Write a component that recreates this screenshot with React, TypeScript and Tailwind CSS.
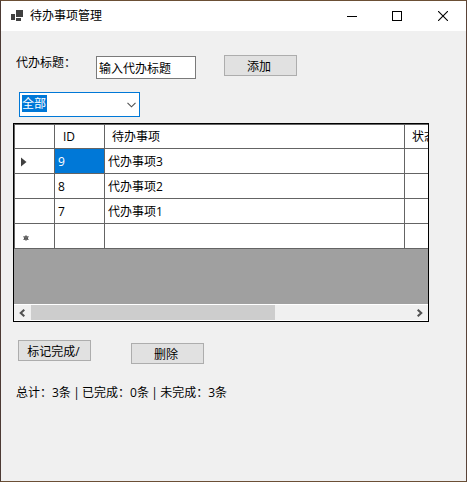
import { useState } from "react";

interface Todo {
  id: number;
  title: string;
}

const todos: Todo[] = [
  { id: 9, title: "代办事项3" },
  { id: 8, title: "代办事项2" },
  { id: 7, title: "代办事项1" },
];

function TitleBar() {
  return (
    <div className="flex h-[30px] shrink-0 items-center bg-white pl-[10px]">
      <svg width="12" height="11" viewBox="0 0 12 11" shapeRendering="crispEdges" fill="#3f3f3f" className="-mt-px">
        <rect x="5" y="0" width="7" height="7" />
        <rect x="0" y="4" width="4" height="6" />
        <rect x="5" y="8" width="5" height="3" />
      </svg>
      <span className="ml-[7px] grow">待办事项管理</span>
      <button className="flex h-full w-[46px] items-center justify-center" aria-label="最小化">
        <svg width="10" height="10" shapeRendering="crispEdges">
          <rect x="0" y="5" width="10" height="1" fill="#000" />
        </svg>
      </button>
      <button className="flex h-full w-[45px] items-center justify-center pr-px" aria-label="最大化">
        <svg width="10" height="10">
          <rect x="0.5" y="0.5" width="9" height="9" fill="none" stroke="#000" />
        </svg>
      </button>
      <button className="flex h-full w-[46px] items-center justify-center" aria-label="关闭">
        <svg width="10" height="10" stroke="#000" strokeWidth="1.1">
          <path d="M0 0L10 10M10 0L0 10" />
        </svg>
      </button>
    </div>
  );
}

function Button({ label, className }: { label: string; className: string }) {
  return (
    <button className={`flex h-[21px] w-[73px] items-center justify-center border border-[#adadad] bg-[#e1e1e1] ${className}`}>
      {label}
    </button>
  );
}

// one line of the grid, every cell draws its own right and bottom rule
function GridRow({ marker, id, title, selected }: { marker?: "current" | "new"; id?: number; title?: string; selected?: boolean }) {
  return (
    <div className="flex h-[25px] bg-white">
      <div className="flex w-10 shrink-0 items-center border-r border-b border-[#646464] pl-[6px]">
        {marker === "current" && (
          <svg width="6" height="10" className="mt-px">
            <path d="M0 0.5L5.5 5L0 9.5Z" fill="#404040" />
          </svg>
        )}
        {marker === "new" && (
          <svg width="7" height="7" className="mt-[4px] ml-[2px]" stroke="#6a6a6a" strokeWidth="1.2">
            <circle cx="3" cy="3" r="2.1" fill="#404040" stroke="none" />
            <path d="M3 0.2V5.8M0.4 1.4L5.6 4.6M5.6 1.4L0.4 4.6" />
          </svg>
        )}
      </div>
      <div className={`flex w-[50px] shrink-0 items-center border-r border-b border-[#646464] pt-[2px] pl-[3px] ${selected ? "bg-[#0078d7] text-white" : ""}`}>
        {id}
      </div>
      <div className="flex w-[300px] shrink-0 items-center border-r border-b border-[#646464] pt-[2px] pl-[3px]">{title}</div>
      <div className="grow border-b border-[#646464]" />
    </div>
  );
}

function TodoGrid() {
  return (
    <div className="mt-[6px] ml-[12px] flex h-[199px] w-[416px] flex-col overflow-hidden border border-black bg-[#a0a0a0]">
      <div className="border-t border-l border-[#646464]">
        <div className="flex h-6 bg-white">
          <div className="w-10 shrink-0 border-r border-b border-[#646464]" />
          <div className="flex w-[50px] shrink-0 items-center border-r border-b border-[#646464] pl-[8px]">ID</div>
          <div className="flex w-[300px] shrink-0 items-center border-r border-b border-[#646464] pl-[7px]">待办事项</div>
          <div className="flex w-[23px] shrink-0 items-center overflow-hidden border-b border-[#646464] pl-[7px] whitespace-nowrap">状态</div>
        </div>
        {todos.map((todo, index) => (
          <GridRow
            key={todo.id}
            id={todo.id}
            title={todo.title}
            marker={index === 0 ? "current" : undefined}
            selected={index === 0}
          />
        ))}
        <GridRow marker="new" />
      </div>
      <div className="mt-auto flex h-[17px] items-center border-y border-white bg-[#f0f0f0]">
        <div className="flex w-[17px] shrink-0 items-center justify-center pr-px">
          <svg width="6" height="8" fill="none" stroke="#505050" strokeWidth="2">
            <path d="M5.3 0.7L1.7 4L5.3 7.3" />
          </svg>
        </div>
        <div className="h-[15px] w-[244px] bg-[#cdcdcd]" />
        <div className="ml-auto flex w-[17px] items-center justify-center">
          <svg width="6" height="8" fill="none" stroke="#505050" strokeWidth="2">
            <path d="M0.7 0.7L4.3 4L0.7 7.3" />
          </svg>
        </div>
      </div>
    </div>
  );
}

function App() {
  const [title, setTitle] = useState("输入代办标题");

  return (
    <div className="flex h-[482px] w-[467px] flex-col overflow-hidden border border-[#6b4f35] border-r-[#5a4338] border-l-[#4c3a34] bg-[#f0f0f0] font-['Open_Sans','Noto_Sans_CJK_SC',sans-serif] text-[12px] leading-4 text-black">
      <TitleBar />
      <div className="flex h-[61px] shrink-0 items-start pl-[15px]">
        <label className="mt-[24px] w-20">代办标题：</label>
        <input
          className="mt-[25px] h-[23px] w-[100px] border border-[#7a7a7a] bg-white px-[2px] outline-none"
          value={title}
          onChange={(e) => setTitle(e.target.value)}
        />
        <Button label="添加" className="mt-6 ml-7 pt-[2px] pr-[3px]" />
      </div>

      <div className="ml-[18px] flex h-[25px] w-[121px] shrink-0 items-start justify-between border border-[#0078d7] bg-white">
        <span className="mt-[2px] ml-[2px] h-[17px] w-[25px] bg-[#0078d7] pt-px text-white">全部</span>
        <svg width="9" height="6" className="mt-[9px] mr-[3px]" fill="none" stroke="#505050" strokeWidth="1.1">
          <path d="M0.5 0.8L4.5 4.8L8.5 0.8" />
        </svg>
      </div>

      <TodoGrid />

      <div className="mt-[18px] flex shrink-0 items-start pl-[17px]">
        <Button label="标记完成/" className="pt-[2px] pr-[2px]" />
        <Button label="删除" className="mt-[3px] ml-10 pt-[2px] pr-[3px]" />
      </div>

      <p className="mt-[21px] ml-[15px] whitespace-nowrap [word-spacing:-0.8px]">总计：3条 | 已完成：0条 | 未完成：3条</p>
    </div>
  );
}

export default App;
